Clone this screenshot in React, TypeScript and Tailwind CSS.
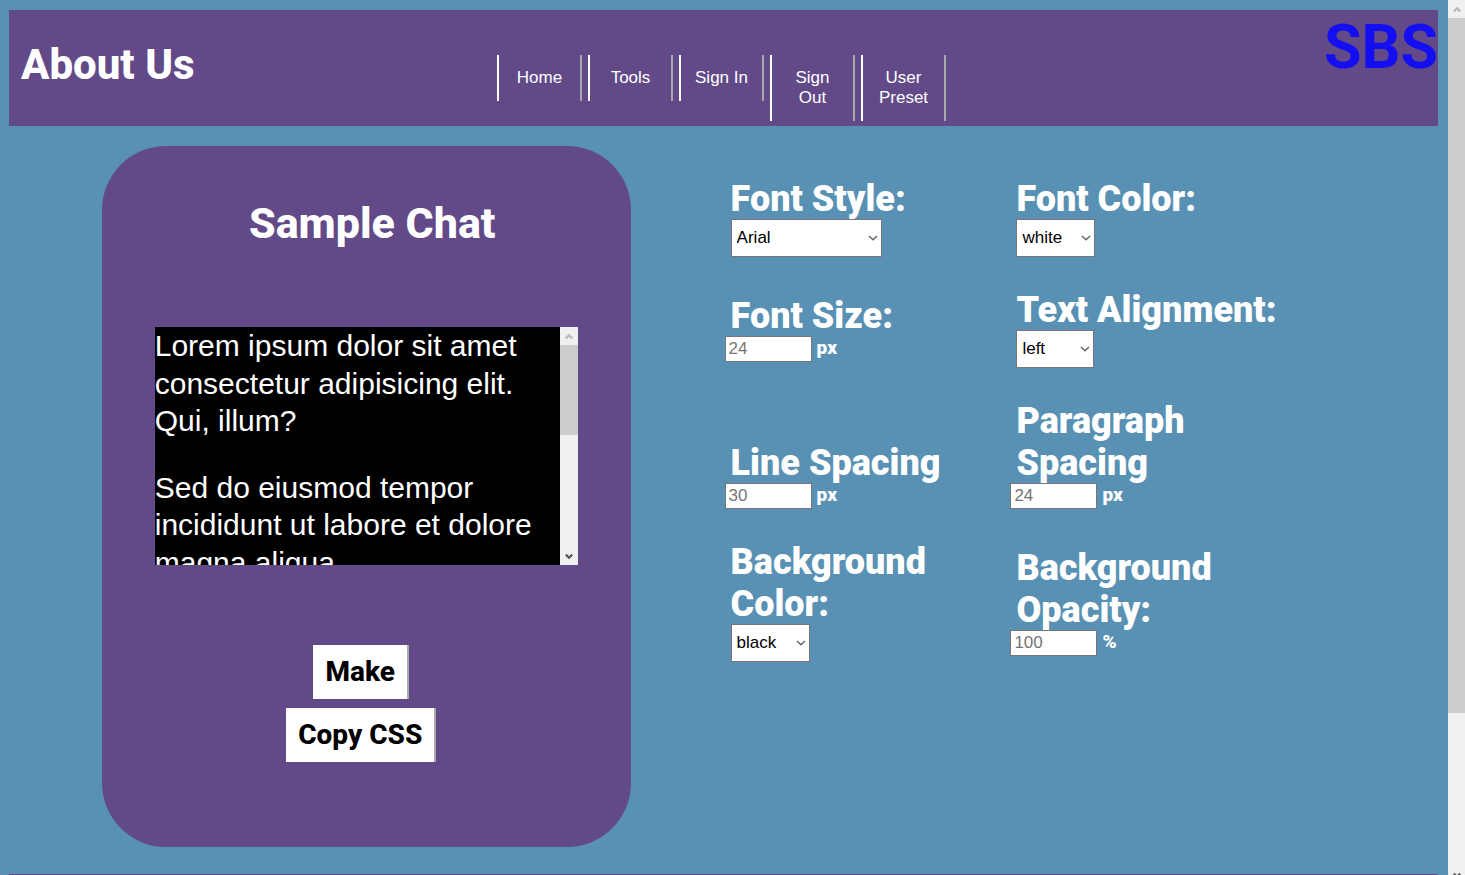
import React from "react";

const navItems = ["Home", "Tools", "Sign In", "Sign Out", "User Preset"];

function Chevron({ className, up = false }: { className: string; up?: boolean }) {
  return (
    <svg className={className} viewBox="0 0 10 6" fill="none" stroke="currentColor" aria-hidden="true">
      <path d={up ? "M1 5 5 1.2 9 5" : "M1 1 5 4.8 9 1"} />
    </svg>
  );
}

function ScrollArrow({ className, up = false }: { className: string; up?: boolean }) {
  return (
    <svg className={className} viewBox="0 0 8 7" fill="none" stroke="currentColor" strokeWidth="2.2" aria-hidden="true">
      <path d={up ? "M.8 5.4 4 2.2 7.2 5.4" : "M.8 1.6 4 4.8 7.2 1.6"} />
    </svg>
  );
}

function ScrollTrack({ width, children }: { width: string; children: React.ReactNode }) {
  return (
    <div className={`${width} flex shrink-0 flex-col items-center bg-[#f0f0f0]`} aria-hidden="true">
      <div className="flex h-[18px] shrink-0 items-center justify-center text-[#b8b8b8]">
        <ScrollArrow up className="w-2" />
      </div>
      {children}
    </div>
  );
}

function FieldLabel({ id, children }: { id: string; children: React.ReactNode }) {
  return (
    <label htmlFor={id} className="-mb-px block font-['Roboto',sans-serif] text-4xl leading-[42px] font-black text-white">
      {children}
    </label>
  );
}

function SelectField({ id, label, width, options }: { id: string; label: string; width: string; options: string[] }) {
  return (
    <div>
      <FieldLabel id={id}>{label}</FieldLabel>
      <div className={`${width} relative`}>
        <select
          id={id}
          className="block h-[38px] w-full appearance-none border border-[#767676] bg-white pl-[5px] text-[17px] text-black"
        >
          {options.map((option) => (
            <option key={option}>{option}</option>
          ))}
        </select>
        <Chevron className="pointer-events-none absolute top-4 right-1 w-[10px] stroke-[1.5] text-[#666]" />
      </div>
    </div>
  );
}

function NumberField({ id, label, unit, value, className = "" }: { id: string; label: string; unit: string; value: string; className?: string }) {
  return (
    <div className={className}>
      <FieldLabel id={id}>{label}</FieldLabel>
      <div className="relative -ml-1.5 flex gap-[5px]">
        <input
          id={id}
          type="text"
          placeholder={value}
          className="h-[26px] w-[87px] border border-[#767676] bg-white px-[3px] text-[17px] placeholder:text-[#757575]"
        />
        <span className="font-['Roboto',sans-serif] text-[19px] leading-6 font-black text-white">{unit}</span>
      </div>
    </div>
  );
}

export default function App() {
  return (
    <div className="flex h-screen overflow-hidden bg-[#5891b4] font-['Liberation_Sans',Arial,sans-serif]">
      <div className="min-w-0 flex-1 overflow-hidden pt-[10px] pr-[10px] pl-[9px]">
        <header className="grid h-[116px] grid-cols-[1fr_auto_1fr] items-start bg-[#624a89] text-white">
          <h1 className="pt-[30px] pl-3 font-['Roboto',sans-serif] text-[42px] leading-[50px] font-extrabold">About Us</h1>
          <nav className="mr-1 flex items-start gap-1.5 pt-[45px]">
            {navItems.map((item) => (
              <a
                key={item}
                href="#"
                className="w-[85px] border-x-2 border-l-white border-r-[#a9a9a9] px-3 py-[13px] text-center text-[17px] leading-5"
              >
                {item}
              </a>
            ))}
          </nav>
          <a href="#" className="justify-self-end font-['Roboto',sans-serif] text-[61px] leading-[74px] font-bold text-[#140ff0]">
            SBS
          </a>
        </header>

        <main className="mt-5 flex items-start">
          <section className="ml-[6.5%] flex h-[701px] w-[37%] shrink-0 flex-col items-center rounded-[64px] bg-[#624a89]">
            <h2 className="mt-[52px] pl-3 font-['Roboto',sans-serif] text-[43px] leading-[50px] font-extrabold text-white">
              Sample Chat
            </h2>
            <div className="mt-[79px] flex h-[238px] w-4/5 shrink-0 bg-black">
              <div className="min-w-0 flex-1 overflow-hidden text-[30px] leading-tight text-white">
                <p className="mb-[29px]">Lorem ipsum dolor sit amet consectetur adipisicing elit. Qui, illum?</p>
                <p>Sed do eiusmod tempor incididunt ut labore et dolore magna aliqua</p>
              </div>
              <ScrollTrack width="w-[18px]">
                <div className="h-[90px] w-full bg-[#cdcdcd]" />
                <div className="mt-auto flex h-[18px] items-center text-[#555]">
                  <ScrollArrow className="w-2" />
                </div>
              </ScrollTrack>
            </div>
            <div className="mt-20 flex flex-col items-center gap-[9px] pr-2.5 font-['Roboto',sans-serif] text-[28px] leading-[54px] font-extrabold text-black">
              <button type="button" className="border-r-2 border-[#a9a9a9] bg-white px-3">Make</button>
              <button type="button" className="border-r-2 border-[#a9a9a9] bg-white px-3">Copy CSS</button>
            </div>
          </section>

          <form className="ml-[7%] grid w-2/5 grid-cols-2 content-start items-end gap-y-8 pt-8">
            <SelectField id="font-style" label="Font Style:" width="w-[151px]" options={["Arial", "Verdana"]} />
            <SelectField id="font-color" label="Font Color:" width="w-[79px]" options={["white", "black"]} />
            <NumberField id="font-size" label="Font Size:" unit="px" value="24" className="pb-1.5" />
            <SelectField id="text-align" label="Text Alignment:" width="w-[78px]" options={["left", "center", "right"]} />
            <NumberField id="line-spacing" label="Line Spacing" unit="px" value="30" />
            <NumberField id="paragraph-spacing" label="Paragraph Spacing" unit="px" value="24" />
            <SelectField id="background-color" label="Background Color:" width="w-[79px]" options={["black", "white"]} />
            <NumberField id="background-opacity" label="Background Opacity:" unit="%" value="100" className="pb-1.5" />
          </form>
        </main>

        <footer className="mt-[27px] h-20 bg-[#624a89]" />
      </div>
      <ScrollTrack width="w-[17px]">
        <div className="h-[695px] w-full shrink-0 bg-[#cdcdcd]" />
        <div className="mt-auto flex h-[3px] shrink-0 items-start overflow-hidden text-[#555]">
          <ScrollArrow className="w-2 shrink-0" />
        </div>
      </ScrollTrack>
    </div>
  );
}
